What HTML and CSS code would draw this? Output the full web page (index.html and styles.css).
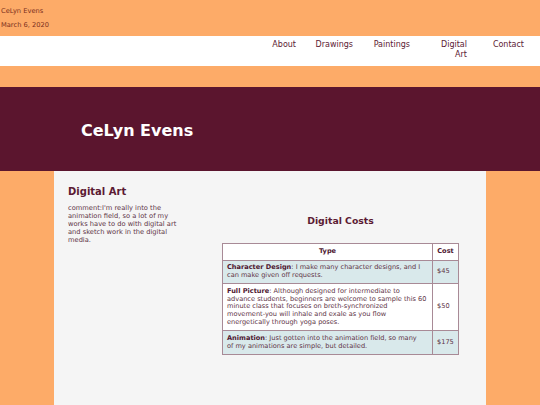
FILE: index.html
```
<!DOCTYPE html>
<html>
<head>
<meta charset="utf-8">
<link rel="stylesheet" href="styles.css">
</head>
<body>
<header class="top">
  <p class="top-name">CeLyn Evens</p>
  <p class="top-date">March 6, 2020</p>
</header>
<nav class="nav">
  <ul class="nav-list">
    <li class="nav-item">About</li>
    <li class="nav-item">Drawings</li>
    <li class="nav-item">Paintings</li>
    <li class="nav-item">Digital Art</li>
    <li class="nav-item">Contact</li>
  </ul>
</nav>
<div class="spacer"></div>
<section class="banner">
  <h1 class="banner-title">CeLyn Evens</h1>
</section>
<main class="content">
  <div class="side">
    <h2 class="side-title">Digital Art</h2>
    <p class="side-text">comment:I'm really into the animation field, so a lot of my works have to do with digital art and sketch work in the digital media.</p>
  </div>
  <div class="costs">
    <h3 class="costs-title">Digital Costs</h3>
    <table class="cost-table">
      <thead>
        <tr><th class="col-type">Type</th><th class="col-cost">Cost</th></tr>
      </thead>
      <tbody>
        <tr class="alt"><td><b>Character Design</b>: I make many character designs, and I can make given off requests.</td><td>$45</td></tr>
        <tr><td><b>Full Picture</b>: Although designed for intermediate to advance students, beginners are welcome to sample this 60 minute class that focuses on breth-synchronized <span class="nowrap">movement-you</span> will inhale and exale as you flow energetically through yoga poses.</td><td>$50</td></tr>
        <tr class="alt"><td><b>Animation</b>: Just gotten into the animation field, so many <span class="nowrap">of my</span> animations are simple, but detailed.</td><td>$175</td></tr>
      </tbody>
    </table>
  </div>
</main>
</body>
</html>
```
FILE: styles.css
```
html, body {
  margin: 0;
  padding: 0;
}
body {
  background: #fdab68;
  font-family: "DejaVu Sans", Verdana, sans-serif;
  height: 405px;
  overflow: hidden;
}
.top {
  height: 36px;
  padding: 7px 0 0 1px;
  box-sizing: border-box;
}
.top p {
  margin: 0;
  font-size: 6.7px;
  line-height: 8px;
  color: #7a2e1c;
}
.top-date {
  margin-top: 6px !important;
}
.nav {
  background: #ffffff;
  height: 30px;
}
.nav-list {
  list-style: none;
  margin: 0;
  padding: 4px 16px 0 0;
  display: flex;
  justify-content: flex-end;
}
.nav-item {
  width: 38px;
  margin-left: 19px;
  text-align: right;
  font-size: 8px;
  line-height: 9.5px;
  color: #5b1a33;
}
.spacer {
  height: 21px;
}
.banner {
  background: #5b152e;
  height: 84px;
  display: flex;
  align-items: center;
  padding-left: 81px;
}
.banner-title {
  margin: 3px 0 0;
  color: #ffffff;
  font-size: 16px;
  font-weight: bold;
}
.content {
  margin: 0 54px;
  background: #f5f5f5;
  height: 234px;
  display: flex;
  padding: 14px 18px 0 14px;
}
.side {
  width: 114px;
  margin-right: 40px;
}
.side-title {
  margin: 0;
  font-size: 10px;
  line-height: 13px;
  color: #5b1a33;
}
.side-text {
  margin: 6px 0 0;
  font-size: 6.7px;
  line-height: 8px;
  color: #5e3446;
}
.costs {
  width: 237px;
  padding-top: 30px;
}
.costs-title {
  margin: 0 0 16px;
  text-align: center;
  font-size: 9.3px;
  line-height: 12px;
  color: #5b1a33;
}
.cost-table {
  width: 237px;
  border-collapse: collapse;
  border: 1px solid #8c6a79;
  font-size: 6.6px;
  line-height: 7.8px;
  color: #5e3446;
}
.cost-table th {
  background: #ffffff;
  color: #4e1730;
  padding: 4px 4px;
  border: 1px solid #a88a96;
  font-weight: bold;
}
.cost-table td {
  padding: 3.5px 4px;
  border: 1px solid #a88a96;
  vertical-align: middle;
  background: #ffffff;
}
.cost-table tr.alt td {
  background: #d9e9eb;
}
.cost-table td b {
  color: #4e1730;
}
.nowrap {
  white-space: nowrap;
}
.col-cost {
  width: 17px;
}
```
